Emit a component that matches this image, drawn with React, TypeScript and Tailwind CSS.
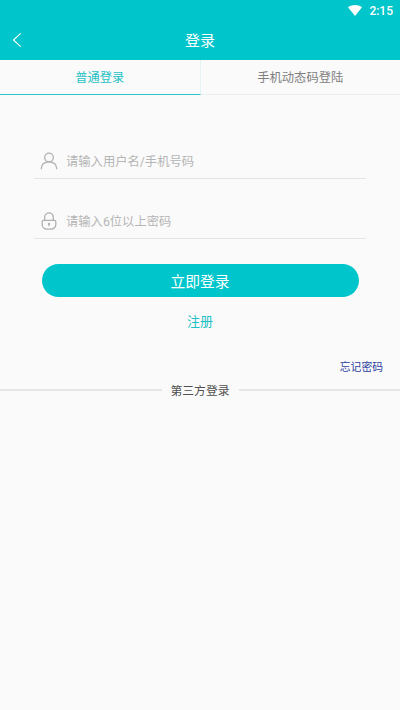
import { useState } from "react";
import type { ReactNode } from "react";

type LoginTab = "password" | "code";

interface FieldProps {
  icon: ReactNode;
  type: string;
  placeholder: string;
  value: string;
  onChange: (value: string) => void;
}

const UserIcon = () => (
  <svg
    className="h-[18px] w-[18px] shrink-0"
    viewBox="0 0 18 18"
    fill="none"
    stroke="#b0b0b0"
    strokeWidth="1.3"
    strokeLinecap="round"
  >
    <circle cx="9" cy="5.5" r="4.3" />
    <path d="M1.2 16.7C1.6 12.6 4.6 9.8 9 9.8s7.4 2.8 7.8 6.9" />
  </svg>
);

const LockIcon = () => (
  <svg
    className="h-[18px] w-[18px] shrink-0"
    viewBox="0 0 18 18"
    fill="none"
    stroke="#b0b0b0"
    strokeWidth="1.3"
    strokeLinecap="round"
  >
    <path d="M4.7 8.3V5.2a4.3 4.3 0 0 1 8.6 0v3.1" />
    <path d="M3.7 8.3h10.6a1.5 1.5 0 0 1 1.5 1.5v2.8a4.5 4.5 0 0 1-4.5 4.5H6.7a4.5 4.5 0 0 1-4.5-4.5V9.8a1.5 1.5 0 0 1 1.5-1.5z" />
    <path d="M9 12v1.6" />
    <circle cx="9" cy="11.8" r="0.5" fill="#b0b0b0" />
  </svg>
);

const Field = ({ icon, type, placeholder, value, onChange }: FieldProps) => (
  <label className="flex h-9 items-center gap-2 border-b border-[#e4e4e4] pl-[6px]">
    {icon}
    <input
      type={type}
      value={value}
      onChange={(e) => onChange(e.target.value)}
      placeholder={placeholder}
      className="w-full bg-transparent pt-[3px] text-[12.3px] text-[#555] placeholder-[#b5b5b5] focus:outline-none"
    />
  </label>
);

const App = () => {
  const [tab, setTab] = useState<LoginTab>("password");
  const [username, setUsername] = useState("");
  const [password, setPassword] = useState("");

  const tabClass = "flex-1 border-b pt-[3px] text-[12.3px] cursor-pointer";
  const activeClass = "border-b-[#2cc4c9] text-[#1fc0c5]";
  const idleClass = "border-b-[#e9eeee] text-[#808080]";

  return (
    <div className="flex min-h-screen flex-col bg-[#fafafa] font-[Roboto,'Noto_Sans_CJK_SC',sans-serif]">
      <header className="bg-[#00c6cb] text-white">
        <div className="flex h-5 items-center justify-end gap-[7px] pr-[7px]">
          <svg className="h-[11px] w-[14px]" viewBox="0 0 14 11" fill="currentColor">
            <path d="M0 2.2C4-.6 10-.6 14 2.2L7 11z" />
          </svg>
          <span className="pt-[2px] text-xs leading-none font-medium">2:15</span>
        </div>
        <div className="grid h-10 grid-cols-3 items-center px-3">
          <button type="button" aria-label="返回" className="w-fit cursor-pointer">
            <svg
              className="h-[14px] w-[10px]"
              viewBox="0 0 10 14"
              fill="none"
              stroke="currentColor"
              strokeWidth="1.1"
            >
              <path d="M8.7.4 1.5 7l7.2 6.6" />
            </svg>
          </button>
          <h1 className="pt-[3px] text-center text-[15px]">登录</h1>
        </div>
      </header>

      <nav className="flex h-[35px]">
        <button
          type="button"
          onClick={() => setTab("password")}
          className={`${tabClass} border-r border-r-[#e3f3f3] ${tab === "password" ? activeClass : idleClass}`}
        >
          普通登录
        </button>
        <button
          type="button"
          onClick={() => setTab("code")}
          className={`${tabClass} ${tab === "code" ? activeClass : idleClass}`}
        >
          手机动态码登陆
        </button>
      </nav>

      <form onSubmit={(e) => e.preventDefault()} className="px-[34px] pt-12">
        <div className="space-y-6">
          <Field
            icon={<UserIcon />}
            type="text"
            placeholder="请输入用户名/手机号码"
            value={username}
            onChange={setUsername}
          />
          <Field
            icon={<LockIcon />}
            type="password"
            placeholder="请输入6位以上密码"
            value={password}
            onChange={setPassword}
          />
        </div>
        <div className="px-[7.5px] pt-[25px]">
          <button
            type="submit"
            className="block h-[33px] w-full cursor-pointer rounded-full bg-[#00c6cb] pt-[3px] text-[14.8px] text-white"
          >
            立即登录
          </button>
        </div>
        <button
          type="button"
          className="mx-auto mt-[15px] block cursor-pointer text-[13px] leading-5 text-[#1fc0c5]"
        >
          注册
        </button>
      </form>

      <div className="flex justify-end pt-7 pr-[17px]">
        <a href="#forgot" className="text-[10.8px] leading-4 text-[#303f9f]">
          忘记密码
        </a>
      </div>
      <div className="mt-[5px] flex items-center gap-[9px]">
        <div className="h-[2px] flex-1 bg-[#e6e6e6]" />
        <span className="pt-[2px] text-[11.8px] leading-4 text-[#505050]">第三方登录</span>
        <div className="h-[2px] flex-1 bg-[#e6e6e6]" />
      </div>
    </div>
  );
};

export default App;
